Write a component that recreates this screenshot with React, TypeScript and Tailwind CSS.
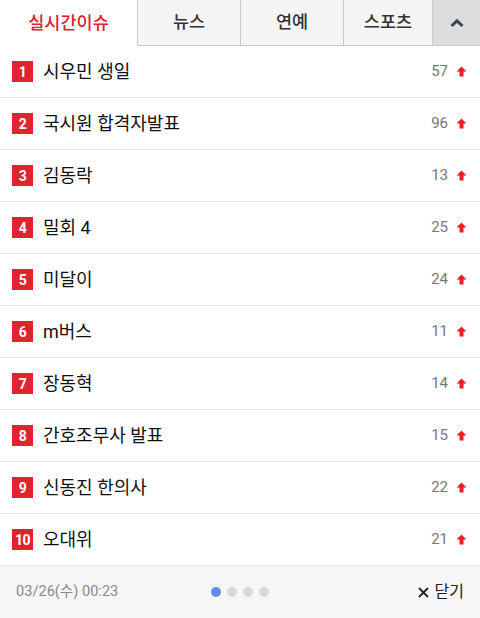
const items: [string, number][] = [
  ["시우민 생일", 57],
  ["국시원 합격자발표", 96],
  ["김동락", 13],
  ["밀회 4", 25],
  ["미달이", 24],
  ["m버스", 11],
  ["장동혁", 14],
  ["간호조무사 발표", 15],
  ["신동진 한의사", 22],
  ["오대위", 21],
];

function UpArrow() {
  return (
    <svg width="11" height="11" viewBox="0 0 11 11" className="shrink-0">
      <path d="M5.5 0.5 L10.5 5.5 L7.5 5.5 L7.5 10.5 L3.5 10.5 L3.5 5.5 L0.5 5.5 Z" fill="#ee1c25" />
    </svg>
  );
}

export default function App() {
  return (
    <div
      className="w-[480px] h-[618px] bg-white flex flex-col overflow-hidden"
      style={{ fontFamily: 'Roboto, "Noto Sans CJK KR", sans-serif' }}
    >
      {/* Tabs */}
      <div className="flex h-[46px] shrink-0">
        <div className="w-[137px] flex items-center justify-center text-[17.5px] font-medium text-[#e0202c]">
          실시간이슈
        </div>
        <div className="w-[103px] flex items-center justify-center text-[17.5px] font-medium text-[#333] bg-[#f5f5f5] border-l border-b border-[#c9c9cc]">
          뉴스
        </div>
        <div className="w-[103px] flex items-center justify-center text-[17.5px] font-medium text-[#333] bg-[#f5f5f5] border-l border-b border-[#c9c9cc]">
          연예
        </div>
        <div className="w-[89px] flex items-center justify-center text-[17.5px] font-medium text-[#333] bg-[#f5f5f5] border-l border-b border-[#c9c9cc]">
          스포츠
        </div>
        <div className="flex-1 flex items-center justify-center bg-[#dcdddd] border-l border-b border-[#c9c9cc]">
          <svg width="14" height="10" viewBox="0 0 14 10">
            <path d="M1.5 8 L7 2.8 L12.5 8" stroke="#3d4452" strokeWidth="3" fill="none" strokeLinejoin="miter" />
          </svg>
        </div>
      </div>

      {/* List */}
      <ul className="flex flex-col">
        {items.map(([label, count], i) => (
          <li
            key={i}
            className="h-[52px] flex items-center pl-[12px] pr-[13px] border-b border-[#e6e6e6]"
          >
            <span className="w-[21px] h-[21px] bg-[#e0232f] text-white text-[14px] font-bold flex items-center justify-center leading-none tracking-[-0.5px]">
              {i + 1}
            </span>
            <span className="ml-[10px] text-[18px] text-[#111] flex-1">{label}</span>
            <span className="text-[15px] text-[#777] mr-[8px]">{count}</span>
            <UpArrow />
          </li>
        ))}
      </ul>

      {/* Footer */}
      <div className="flex-1 bg-[#f6f6f6] flex items-center px-[16px]">
        <span className="text-[14.6px] text-[#8a8a8a] w-[180px]">03/26(수) 00:23</span>
        <div className="flex-1 flex items-center gap-[6px] pl-[15px]">
          <span className="w-[10px] h-[10px] rounded-full bg-[#5a8ee8]" />
          <span className="w-[10px] h-[10px] rounded-full bg-[#d6d9dd]" />
          <span className="w-[10px] h-[10px] rounded-full bg-[#d6d9dd]" />
          <span className="w-[10px] h-[10px] rounded-full bg-[#d6d9dd]" />
        </div>
        <div className="flex items-center gap-[6px] text-[16px] text-[#222]">
          <svg width="11" height="11" viewBox="0 0 11 11">
            <path d="M1 1 L10 10 M10 1 L1 10" stroke="#222" strokeWidth="1.8" />
          </svg>
          닫기
        </div>
      </div>
    </div>
  );
}
